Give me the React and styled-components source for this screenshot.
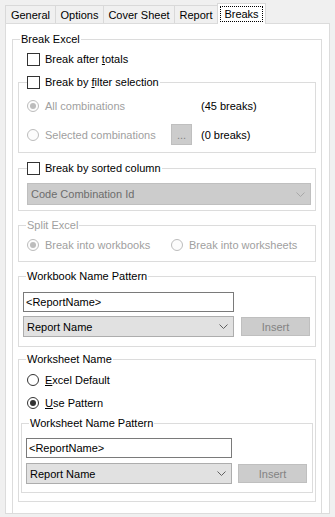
import React from 'react'
import styled, { createGlobalStyle } from 'styled-components'

const GlobalStyle = createGlobalStyle`
  html, body {
    margin: 0;
    padding: 0;
    background: #f0f0f0;
  }
  body {
    font-family: "Liberation Sans", Arial, sans-serif;
    font-size: 11px;
    color: #000;
  }
`

const Window = styled.div`
  width: 335px;
  height: 517px;
  box-sizing: border-box;
  padding: 3px 0 0 5px;
  overflow: hidden;
`

const TabStrip = styled.div`
  display: flex;
  align-items: flex-end;
  height: 20px;
`

const Tab = styled.div`
  box-sizing: border-box;
  width: ${(p) => p.$w}px;
  height: ${(p) => (p.$active ? 21 : 18)}px;
  margin-left: -1px;
  margin-bottom: ${(p) => (p.$active ? -1 : 0)}px;
  border: 1px solid #d9d9d9;
  border-bottom: none;
  background: ${(p) => (p.$active ? '#fff' : '#f0f0f0')};
  display: flex;
  align-items: center;
  justify-content: center;
  position: relative;
  z-index: ${(p) => (p.$active ? 2 : 1)};
  white-space: nowrap;
  &:first-child {
    margin-left: 0;
  }
`

const Focus = styled.span`
  border: 1px dotted #000;
  padding: 0 3px;
  line-height: 14px;
`

const Panel = styled.div`
  box-sizing: border-box;
  width: 325px;
  height: 491px;
  background: #fff;
  border: 1px solid #dcdcdc;
  padding: 8px 7px 0 6px;
  overflow: hidden;
`

const Group = styled.fieldset`
  margin: ${(p) => p.$mt || 0}px 0 0;
  padding: 0;
  border: 1px solid #dcdcdc;
  min-width: 0;
`

const Title = styled.legend`
  margin-left: 7px;
  padding: 0 1px;
  height: 14px;
  line-height: 14px;
  color: ${(p) => (p.$disabled ? '#a0a0a0' : '#000')};
`

const CheckLegend = styled.legend`
  margin-left: 8px;
  padding: 0 1px 0 0;
  height: 14px;
`

const Body = styled.div`
  padding: ${(p) => p.$pad};
`

const Line = styled.label`
  display: flex;
  align-items: center;
  gap: 5px;
  height: 14px;
  line-height: 14px;
  margin-top: ${(p) => p.$mt || 0}px;
  padding-left: ${(p) => p.$pl || 0}px;
  color: ${(p) => (p.$disabled ? '#a0a0a0' : '#000')};
  white-space: nowrap;
`

const Check = styled.span`
  box-sizing: border-box;
  width: 13px;
  height: 13px;
  align-self: flex-end;
  border: 1px solid #333;
  background: #fff;
  flex: none;
`

const Radio = styled.span`
  box-sizing: border-box;
  width: 12px;
  height: 12px;
  margin-right: 1px;
  border-radius: 50%;
  border: 1px solid ${(p) => (p.$disabled ? '#bcbcbc' : '#333')};
  background: ${(p) => (p.$disabled ? '#fcfcfc' : '#fff')};
  display: flex;
  align-items: center;
  justify-content: center;
  flex: none;
  &::after {
    content: '';
    display: ${(p) => (p.$checked ? 'block' : 'none')};
    width: 6px;
    height: 6px;
    border-radius: 50%;
    background: ${(p) => (p.$disabled ? '#bcbcbc' : '#333')};
  }
`

const ChoiceGrid = styled.div`
  display: grid;
  grid-template-columns: 144px 30px auto;
  align-items: center;
  height: ${(p) => p.$h}px;
  margin-top: ${(p) => p.$mt}px;
`

const Count = styled.span`
  grid-column: 3;
  white-space: nowrap;
`

const SmallButton = styled.div`
  box-sizing: border-box;
  width: 21px;
  height: 21px;
  background: #cccccc;
  border: 1px solid #bfbfbf;
  color: #838383;
  display: flex;
  align-items: flex-end;
  justify-content: center;
  padding-bottom: 4px;
  line-height: 10px;
`

const Combo = styled.div`
  box-sizing: border-box;
  width: ${(p) => (p.$w ? `${p.$w}px` : '100%')};
  height: ${(p) => p.$h || 21}px;
  margin-top: ${(p) => p.$mt || 0}px;
  background: ${(p) => (p.$disabled ? '#cccccc' : '#e1e1e1')};
  border: 1px solid ${(p) => (p.$disabled ? '#bfbfbf' : '#adadad')};
  color: ${(p) => (p.$disabled ? '#6d6d6d' : '#000')};
  display: flex;
  align-items: center;
  justify-content: space-between;
  padding: 0 5px 0 3px;
  flex: none;
  svg {
    display: block;
  }
`

const TextField = styled.div`
  box-sizing: border-box;
  width: ${(p) => p.$w}px;
  height: 20px;
  margin-top: ${(p) => p.$mt}px;
  border: 1px solid #7a7a7a;
  background: #fff;
  padding-left: 2px;
  line-height: 18px;
`

const ComboRow = styled.div`
  display: flex;
  align-items: center;
  gap: ${(p) => p.$gap}px;
  margin-top: ${(p) => p.$mt}px;
`

const InsertButton = styled.div`
  box-sizing: border-box;
  width: 69px;
  height: 19px;
  background: #cccccc;
  border: 1px solid #bfbfbf;
  color: #838383;
  display: flex;
  align-items: center;
  justify-content: center;
`

const Chevron = ({ color = '#606060' }) => (
  <svg width="9" height="5" viewBox="0 0 9 5">
    <polyline points="0.5,0.5 4.5,4.5 8.5,0.5" fill="none" stroke={color} strokeWidth="1" />
  </svg>
)

const tabs = [
  { label: 'General', w: 51 },
  { label: 'Options', w: 49 },
  { label: 'Cover Sheet', w: 72 },
  { label: 'Report', w: 44 },
  { label: 'Breaks', w: 49, active: true },
]

const PatternEditor = ({ pad, fieldWidth, gap }) => (
  <Body $pad={pad}>
    <TextField $w={fieldWidth} $mt={8}>&lt;ReportName&gt;</TextField>
    <ComboRow $gap={gap} $mt={gap === 7 ? 4 : 5}>
      <Combo $w={fieldWidth}>
        Report Name
        <Chevron />
      </Combo>
      <InsertButton>Insert</InsertButton>
    </ComboRow>
  </Body>
)

export default function App() {
  return (
    <>
      <GlobalStyle />
      <Window>
        <TabStrip>
          {tabs.map((t) => (
            <Tab key={t.label} $w={t.w} $active={t.active}>
              {t.active ? <Focus>{t.label}</Focus> : t.label}
            </Tab>
          ))}
        </TabStrip>
        <Panel>
          <Group>
            <Title>Break Excel</Title>
            <Body $pad="0 5px 11px">
              <Line $mt={6} $pl={9}>
                <Check />
                <span>
                  Break after <u>t</u>otals
                </span>
              </Line>

              <Group $mt={9}>
                <CheckLegend>
                  <Line>
                    <Check />
                    <span>
                      Break by <u>f</u>ilter selection
                    </span>
                  </Line>
                </CheckLegend>
                <Body $pad="0 0 7px 8px">
                  <ChoiceGrid $mt={10} $h={14}>
                    <Line $disabled>
                      <Radio $disabled $checked />
                      All combinations
                    </Line>
                    <Count>(45 breaks)</Count>
                  </ChoiceGrid>
                  <ChoiceGrid $mt={11} $h={21}>
                    <Line $disabled>
                      <Radio $disabled />
                      Selected combinations
                    </Line>
                    <SmallButton>...</SmallButton>
                    <Count>(0 breaks)</Count>
                  </ChoiceGrid>
                </Body>
              </Group>

              <Group $mt={8}>
                <CheckLegend>
                  <Line>
                    <Check />
                    <span>Break by sorted column</span>
                  </Line>
                </CheckLegend>
                <Body $pad="0 4px 5px 8px">
                  <Combo $disabled $h={22} $mt={8}>
                    Code Combination Id
                    <Chevron color="#a8a8a8" />
                  </Combo>
                </Body>
              </Group>

              <Group $mt={7}>
                <Title $disabled>Split Excel</Title>
                <Body $pad="0 0 9px 8px">
                  <ChoiceGrid $mt={6} $h={14}>
                    <Line $disabled>
                      <Radio $disabled $checked />
                      Break into workbooks
                    </Line>
                    <Line $disabled>
                      <Radio $disabled />
                      Break into worksheets
                    </Line>
                  </ChoiceGrid>
                </Body>
              </Group>

              <Group $mt={7}>
                <Title>Workbook Name Pattern</Title>
                <PatternEditor pad="1px 5px 9px 4px" fieldWidth={211} gap={7} />
              </Group>

              <Group $mt={5}>
                <Title>Worksheet Name</Title>
                <Body $pad="0 2px 8px 2px">
                  <Line $mt={7} $pl={6}>
                    <Radio />
                    <span>
                      <u>E</u>xcel Default
                    </span>
                  </Line>
                  <Line $mt={9} $pl={6}>
                    <Radio $checked />
                    <span>
                      <u>U</u>se Pattern
                    </span>
                  </Line>
                  <Group $mt={6}>
                    <Title>Worksheet Name Pattern</Title>
                    <PatternEditor pad="0 5px 8px 4px" fieldWidth={206} gap={6} />
                  </Group>
                </Body>
              </Group>
            </Body>
          </Group>
        </Panel>
      </Window>
    </>
  )
}
